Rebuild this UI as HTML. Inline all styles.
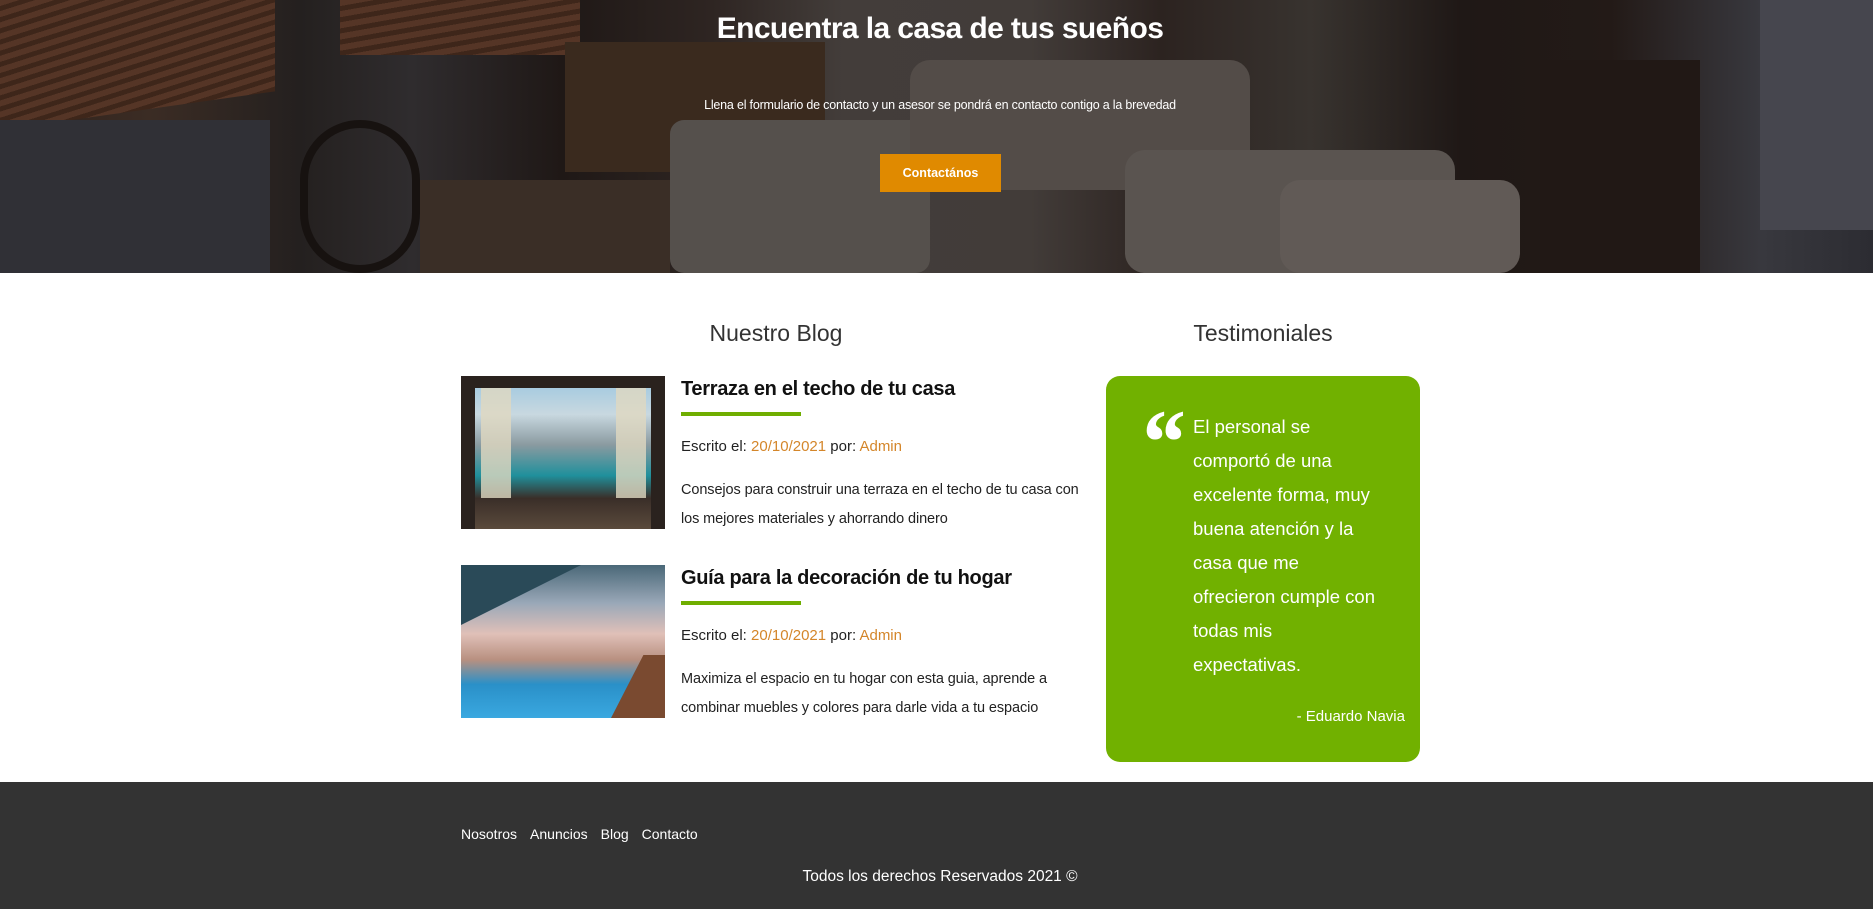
<!DOCTYPE html>
<html><head><meta charset="utf-8"><style>
*{margin:0;padding:0;box-sizing:border-box}
body{width:1873px;height:909px;overflow:hidden;font-family:"Liberation Sans",sans-serif;background:#fff;position:relative}
.hero{position:absolute;left:0;top:0;width:1873px;height:273px;overflow:hidden;
background:linear-gradient(90deg,#2e201a 0%,#3b2c24 8%,#24201f 16%,#2f2c2e 22%,#1f1816 30%,#2e2522 38%,#433d3a 45%,#423c39 55%,#2c2320 62%,#38332f 70%,#1f1816 78%,#231a17 86%,#38383e 94%,#2c2c32 100%)}
.hero .sh{position:absolute}
.hero h1{position:absolute;left:0;width:1880px;top:12px;text-align:center;color:#fff;font-size:30px;font-weight:bold;letter-spacing:-0.6px}
.hero p{position:absolute;left:0;width:1880px;top:98px;text-align:center;color:#fff;font-size:12.5px;letter-spacing:-0.2px}
.btn{position:absolute;left:880px;top:154px;width:121px;height:38px;background:#e08a00;color:#fff;font-size:12.5px;font-weight:bold;text-align:center;line-height:38px}
.h2{position:absolute;top:320px;font-size:23px;color:#333;font-weight:300;text-align:center;width:300px}
.img{position:absolute;left:461px;width:204px;height:153px}
.t{position:absolute;left:681px;font-size:20px;font-weight:bold;color:#111;letter-spacing:-0.3px}
.bar{position:absolute;left:681px;width:120px;height:4px;background:#6fae00}
.meta{position:absolute;left:681px;font-size:15px;color:#222}
.meta span{color:#d4862a}
.d{position:absolute;left:681px;font-size:14.5px;color:#222;line-height:29px;width:405px;letter-spacing:-0.1px}
.box{position:absolute;left:1106px;top:376px;width:314px;height:386px;background:#71b100;border-radius:14px}
.q{position:absolute;left:1193px;top:410px;width:185px;color:#fff;font-size:18.5px;line-height:34px}
.qm{position:absolute;left:1138px;top:402px;color:#fff;font-size:92px;font-weight:bold;font-style:italic;font-family:"Liberation Serif",serif;line-height:80px}
.au{position:absolute;right:468px;top:708px;color:#fff;font-size:15px}
.foot{position:absolute;left:0;top:782px;width:1873px;height:127px;background:#333}
.links{position:absolute;left:461px;top:826px;color:#fff;font-size:14px}
.links span{margin-right:13px}
.copy{position:absolute;left:0;width:1880px;top:868px;text-align:center;color:#fff;font-size:15.5px}
</style></head><body>
<div class="hero">
<div class="sh" style="left:0;top:0;width:275px;height:130px;background:repeating-linear-gradient(170deg,#553526 0 6px,#3e261a 6px 11px);transform:skewY(-8deg);transform-origin:0 0"></div>
<div class="sh" style="left:340px;top:0;width:240px;height:55px;background:repeating-linear-gradient(170deg,#553526 0 6px,#3e261a 6px 11px)"></div>
<div class="sh" style="left:0;top:120px;width:270px;height:153px;background:#303036"></div>
<div class="sh" style="left:565px;top:42px;width:260px;height:130px;background:#3a2a1e"></div>
<div class="sh" style="left:670px;top:120px;width:260px;height:153px;background:#55504c;border-radius:14px"></div>
<div class="sh" style="left:910px;top:60px;width:340px;height:130px;background:#534c48;border-radius:20px"></div>
<div class="sh" style="left:1125px;top:150px;width:330px;height:123px;background:#5a5450;border-radius:20px"></div>
<div class="sh" style="left:1280px;top:180px;width:240px;height:93px;background:#615a56;border-radius:20px"></div>
<div class="sh" style="left:420px;top:180px;width:250px;height:93px;background:#3a2e26"></div>
<div class="sh" style="left:1540px;top:60px;width:160px;height:213px;background:#211815"></div>
<div class="sh" style="left:1760px;top:0;width:113px;height:230px;background:#46464e"></div>
<div class="sh" style="left:300px;top:120px;width:120px;height:153px;border-radius:60px;border:8px solid #171210"></div>
<h1>Encuentra la casa de tus sueños</h1>
<p>Llena el formulario de contacto y un asesor se pondrá en contacto contigo a la brevedad</p>
<div class="btn">Contactános</div>
</div>

<div class="h2" style="left:626px">Nuestro Blog</div>
<div class="h2" style="left:1113px">Testimoniales</div>

<div class="img" style="top:376px;background:linear-gradient(180deg,#9ac6e0 0%,#c8d8e0 25%,#8a9aa0 45%,#20909c 65%,#3a2e28 80%,#5a4a3c 100%)">
<div style="position:absolute;left:0;top:0;width:204px;height:153px;border:14px solid #2a221e;border-bottom:none;border-top-width:12px"></div>
<div style="position:absolute;left:20px;top:12px;width:30px;height:110px;background:#e0d8c0;opacity:.8"></div>
<div style="position:absolute;left:155px;top:12px;width:30px;height:110px;background:#e0d8c0;opacity:.8"></div>
</div>
<div class="t" style="top:378px">Terraza en el techo de tu casa</div>
<div class="bar" style="top:412px"></div>
<div class="meta" style="top:438px">Escrito el: <span>20/10/2021</span> por: <span>Admin</span></div>
<div class="d" style="top:476px">Consejos para construir una terraza en el techo de tu casa con los mejores materiales y ahorrando dinero</div>

<div class="img" style="top:565px;background:linear-gradient(180deg,#4a6878 0%,#9aa8b8 25%,#e0c0b8 45%,#b89080 62%,#2a90c8 78%,#3aa8e0 100%)">
<div style="position:absolute;left:0;top:0;width:120px;height:60px;background:#2a4a58;clip-path:polygon(0 0,100% 0,0 100%)"></div>
<div style="position:absolute;left:150px;top:90px;width:54px;height:63px;background:#7a4a30;clip-path:polygon(60% 0,100% 0,100% 100%,0 100%)"></div>
</div>
<div class="t" style="top:567px">Guía para la decoración de tu hogar</div>
<div class="bar" style="top:601px"></div>
<div class="meta" style="top:627px">Escrito el: <span>20/10/2021</span> por: <span>Admin</span></div>
<div class="d" style="top:665px">Maximiza el espacio en tu hogar con esta guia, aprende a combinar muebles y colores para darle vida a tu espacio</div>

<div class="box"></div>
<div class="qm">“</div>
<div class="q">El personal se comportó de una excelente forma, muy buena atención y la casa que me ofrecieron cumple con todas mis expectativas.</div>
<div class="au">- Eduardo Navia</div>

<div class="foot"></div>
<div class="links"><span>Nosotros</span><span>Anuncios</span><span>Blog</span><span>Contacto</span></div>
<div class="copy">Todos los derechos Reservados 2021 ©</div>
</body></html>
